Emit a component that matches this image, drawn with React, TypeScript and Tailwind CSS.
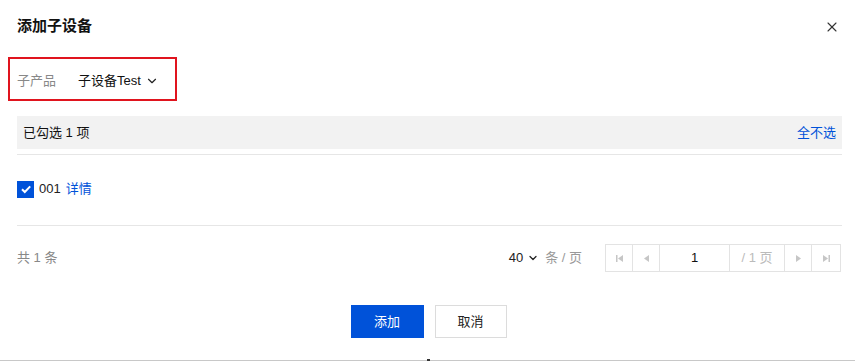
import { X, ChevronDown } from "lucide-react";

const font = {
  fontFamily: '"Liberation Sans", "Noto Sans CJK SC", sans-serif',
};

function PageBtn({
  children,
  w = "w-[27px]",
}: {
  children: React.ReactNode;
  w?: string;
}) {
  return (
    <div className={`flex h-full ${w} items-center justify-center border-r border-[#e3e3e3]`}>
      {children}
    </div>
  );
}

export default function App() {
  return (
    <div
      className="relative h-[361px] w-[855px] overflow-hidden bg-white text-[13px] text-[#222]"
      style={font}
    >
      {/* Header */}
      <div className="flex h-[54px] items-start justify-between pl-[17px] pr-[15px] pt-[16px]">
        <h1 className="text-[15px] font-bold leading-[20px] text-[#111]">
          添加子设备
        </h1>
        <X
          className="mt-[3px] text-[#333]"
          size={16}
          strokeWidth={1.6}
        />
      </div>

      {/* Product selector (highlighted) */}
      <div className="ml-[8px] mt-[3px] flex h-[44px] w-[169px] items-center border-2 border-[#e0141e] pl-[7px] pt-[3px]">
        <span className="text-[#888]">
          子产品
        </span>
        <span className="ml-[22px] text-[#111]">
          子设备Test
        </span>
        <ChevronDown
          className="ml-[4px] text-[#222]"
          size={14}
          strokeWidth={2}
        />
      </div>

      {/* Selected bar */}
      <div className="ml-[17px] mr-[13px] mt-[15px] flex h-[33px] items-center justify-between bg-[#f2f2f2] px-[6px]">
        <span className="text-[#111]">
          已勾选 1 项
        </span>
        <span className="text-[#0052d9]">
          全不选
        </span>
      </div>
      <div className="ml-[17px] mr-[13px] mt-[5px] h-px bg-[#e6e6e6]" />

      {/* Item list */}
      <div className="ml-[17px] flex h-[70px] items-center pb-[2px]">
        <div className="flex h-[17px] w-[17px] items-center justify-center bg-[#0052d9]">
          <svg
            width="12"
            height="12"
            viewBox="0 0 12 12"
            fill="none"
          >
            <path
              d="M2 6.2 L4.8 9 L10.2 3.4"
              stroke="white"
              strokeWidth="2"
            />
          </svg>
        </div>
        <span className="ml-[5px] text-[#222]">
          001
        </span>
        <span className="ml-[5px] text-[#0052d9]">
          详情
        </span>
      </div>
      <div className="ml-[17px] mr-[13px] h-px bg-[#e6e6e6]" />

      {/* Footer / pagination */}
      <div className="ml-[17px] mr-[14px] mt-[18px] flex h-[28px] items-center">
        <span className="text-[#888]">
          共 1 条
        </span>
        <div className="ml-auto flex items-center">
          <span className="text-[#222]">
            40
          </span>
          <ChevronDown
            className="ml-[4px] text-[#222]"
            size={12}
            strokeWidth={2.5}
          />
          <span className="ml-[6px] text-[#999]">
            条 / 页
          </span>
        </div>
        <div className="ml-[23px] flex h-[28px] items-center border border-r-0 border-[#e3e3e3]">
          <PageBtn>
            <svg width="9" height="9" viewBox="0 0 9 9">
              <rect x="1" y="1" width="1.5" height="7" fill="#c6c6c6" />
              <path d="M8 1 L3 4.5 L8 8 Z" fill="#c6c6c6" />
            </svg>
          </PageBtn>
          <PageBtn>
            <svg width="9" height="9" viewBox="0 0 9 9">
              <path d="M7 1 L2 4.5 L7 8 Z" fill="#c6c6c6" />
            </svg>
          </PageBtn>
          <div className="flex h-full w-[70px] items-center justify-center border-r border-[#e3e3e3] text-[#111]">
            1
          </div>
          <div className="flex h-full w-[55px] items-center justify-center border-r border-[#e3e3e3] text-[#bbb]">
            / 1 页
          </div>
          <PageBtn>
            <svg width="9" height="9" viewBox="0 0 9 9">
              <path d="M2 1 L7 4.5 L2 8 Z" fill="#c6c6c6" />
            </svg>
          </PageBtn>
          <PageBtn w="w-[29px]">
            <svg width="9" height="9" viewBox="0 0 9 9">
              <path d="M1 1 L6 4.5 L1 8 Z" fill="#c6c6c6" />
              <rect x="6.5" y="1" width="1.5" height="7" fill="#c6c6c6" />
            </svg>
          </PageBtn>
        </div>
      </div>

      {/* Actions */}
      <div className="mt-[33px] flex justify-center gap-[11px] pl-[2px]">
        <button className="h-[33px] w-[73px] bg-[#0052d9] text-white">
          添加
        </button>
        <button className="h-[33px] w-[72px] border border-[#dcdcdc] bg-white text-[#222]">
          取消
        </button>
      </div>

      {/* Bottom edge */}
      <div className="absolute bottom-0 left-0 h-px w-full bg-[#c8c8c8]" />
      <div className="absolute bottom-0 left-[427px] h-[2px] w-[3px] bg-[#333]" />
    </div>
  );
}
